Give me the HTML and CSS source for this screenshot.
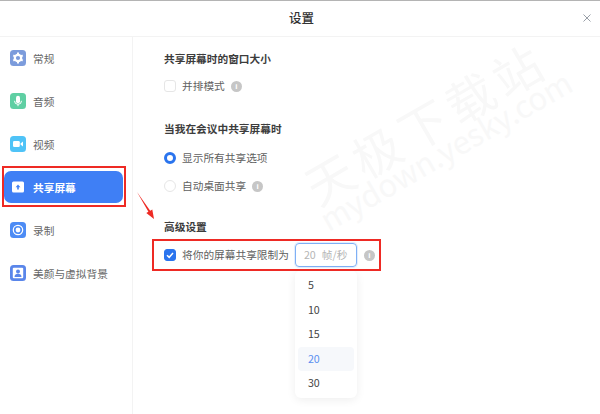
FILE: index.html
```html
<!DOCTYPE html>
<html lang="zh">
<head>
<meta charset="utf-8">
<title>设置</title>
<link rel="stylesheet" href="styles.css">
</head>
<body>
<div class="window">
  <header class="titlebar">
    <h1 class="title">设置</h1>
    <svg class="close" viewBox="0 0 8 8"><path d="M.5.5l7 7M7.500.5l-7 7"/></svg>
  </header>
  <div class="main">
    <nav class="sidebar">
      <a class="nav-item">
        <svg class="nav-icon" viewBox="0 0 16 16"><rect width="16" height="16" rx="3.500" fill="#7c9cdc"/><circle cx="8" cy="8" r="3.200" fill="none" stroke="#fff" stroke-width="2.200"/><path d="M8 2.600v2M8 11.400v2M3.300 5.300l1.700 1M11 9.700l1.700 1M3.300 10.700l1.700-1M11 6.300l1.700-1" stroke="#fff" stroke-width="2"/></svg>
        <span>常规</span>
      </a>
      <a class="nav-item">
        <svg class="nav-icon" viewBox="0 0 16 16"><rect width="16" height="16" rx="3.500" fill="#5fcfa3"/><rect x="6" y="2.800" width="4" height="7.400" rx="2" fill="#fff"/><path d="M4.500 7.800a3.500 3.500 0 0 0 7 0M8 11.300v1.900" fill="none" stroke="#fff" stroke-width="1"/></svg>
        <span>音频</span>
      </a>
      <a class="nav-item">
        <svg class="nav-icon" viewBox="0 0 16 16"><rect width="16" height="16" rx="3.500" fill="#4fc3f7"/><rect x="3" y="5" width="6.800" height="6" rx="1.300" fill="#fff"/><path d="M10.500 7.500L13 5.600v4.800L10.500 8.500z" fill="#fff"/></svg>
        <span>视频</span>
      </a>
      <a class="nav-item active">
        <svg class="nav-icon" viewBox="0 0 16 16"><rect x="2" y="2.500" width="12" height="11" rx="1.500" fill="#fff"/><path d="M8 5.500L5.600 8.200h1.600v2.300h1.600V8.200h1.600z" fill="#3f7ff5"/></svg>
        <span>共享屏幕</span>
      </a>
      <a class="nav-item">
        <svg class="nav-icon" viewBox="0 0 16 16"><rect width="16" height="16" rx="3.500" fill="#4d8cf5"/><circle cx="8" cy="8" r="4.700" fill="none" stroke="#fff" stroke-width="1.200"/><circle cx="8" cy="8" r="2.400" fill="#fff"/></svg>
        <span>录制</span>
      </a>
      <a class="nav-item">
        <svg class="nav-icon" viewBox="0 0 16 16"><rect width="16" height="16" rx="3.500" fill="#5a86ea"/><rect x="2.800" y="2.800" width="10.400" height="10.400" rx="1" fill="#fff"/><circle cx="8" cy="6.500" r="2" fill="#5a86ea"/><path d="M4.500 12c0-2.300 1.500-3.200 3.500-3.200s3.500.9 3.500 3.200z" fill="#5a86ea"/></svg>
        <span>美颜与虚拟背景</span>
      </a>
    </nav>
    <section class="content">
      <h2 class="heading">共享屏幕时的窗口大小</h2>
      <div class="option first">
        <span class="check"></span><span>并排模式</span><span class="info">i</span>
      </div>
      <h2 class="heading second">当我在会议中共享屏幕时</h2>
      <div class="option radio-first">
        <span class="radio on"></span><span>显示所有共享选项</span>
      </div>
      <div class="option">
        <span class="radio"></span><span>自动桌面共享</span><span class="info">i</span>
      </div>
      <h2 class="heading third">高级设置</h2>
      <div class="option limit">
        <span class="check on"><svg viewBox="0 0 10 10"><path d="M2 5.200l2.200 2.100L8 3"/></svg></span>
        <span>将你的屏幕共享限制为</span>
        <div class="fps-wrap">
          <div class="fps"><span class="fps-num">20</span><span>帧/秒</span></div>
          <ul class="menu">
            <li>5</li><li>10</li><li>15</li><li class="sel">20</li><li>30</li>
          </ul>
        </div>
        <span class="info">i</span>
      </div>
    </section>
  </div>
  <div class="watermark wm-cn">天极下载站</div>
  <div class="watermark wm-en">mydown.yesky.com</div>
  <div class="mark mark-nav"></div>
  <div class="mark mark-limit"></div>
  <svg class="arrow" viewBox="0 0 22 29"><path d="M2 1L15.200 19.800 17.300 18.500 19 28 11.300 22.100 13.400 20.800z" fill="#ee2a24"/></svg>
</div>
</body>
</html>
```
FILE: styles.css
```css
* { box-sizing: border-box; }
html, body { margin: 0; padding: 0; }
body {
  width: 600px;
  height: 414px;
  overflow: hidden;
  background: #fff;
  font-family: "Noto Sans CJK SC", "Noto Sans", sans-serif;
  color: #5f5f5f;
  font-size: 10.700px;
}
.window {
  position: relative;
  width: 600px;
  height: 414px;
  overflow: hidden;
  border-top: 1px solid #b4b4b4;
}
.titlebar {
  height: 36px;
  display: flex;
  align-items: center;
  justify-content: center;
  border-bottom: 1px solid #f3f3f3;
  position: relative;
}
.title {
  margin: 0 0 2px 3px;
  font-size: 12.500px;
  font-weight: 500;
  color: #333;
}
.close {
  position: absolute;
  right: 9px;
  top: 13px;
  width: 8px;
  height: 8px;
  fill: none;
  stroke: #7f8691;
  stroke-width: .8;
}
.main {
  display: flex;
  height: 377px;
}
.sidebar {
  width: 133px;
  border-right: 1px solid #f3f3f3;
  padding: 5px 9px 0 4px;
  display: flex;
  flex-direction: column;
  gap: 11px;
  flex: none;
}
.nav-item {
  height: 32px;
  display: flex;
  align-items: center;
  gap: 7px;
  padding-left: 6px;
  border-radius: 7px;
  color: #666;
}
.nav-item.active {
  background: #3f7ff5;
  color: #fff;
  font-weight: 700;
}
.nav-icon { width: 16px; height: 16px; flex: none; }
.content {
  padding: 15px 0 0 31px;
  flex: 1;
}
.heading {
  margin: 0;
  height: 14px;
  line-height: 14px;
  font-size: 10.700px;
  font-weight: 700;
  color: #3c3c3c;
}
.heading.second { margin-top: 29px; }
.heading.third { margin-top: 27px; }
.option {
  display: flex;
  align-items: center;
  gap: 6px;
  height: 14px;
  line-height: 14px;
  margin-top: 14px;
}
.option.first { margin-top: 13px; }
.option.radio-first { margin-top: 15px; }
.check {
  width: 12px;
  height: 12px;
  border: 1px solid #e6e6e6;
  border-radius: 3px;
  background: #fff;
  flex: none;
}
.check.on {
  background: #2a74ee;
  border-color: #2a74ee;
  display: flex;
}
.check svg { width: 100%; height: 100%; fill: none; stroke: #fff; stroke-width: 1.500; }
.radio {
  width: 12px;
  height: 12px;
  border: 1px solid #e6e6e6;
  border-radius: 50%;
  background: #fff;
  flex: none;
}
.radio.on { border: 3.500px solid #2a74ee; }
.info {
  width: 11px;
  height: 11px;
  border-radius: 50%;
  background: #c6c6c6;
  color: #fff;
  font: 700 8px/11px "Liberation Sans", sans-serif;
  text-align: center;
  flex: none;
}
.fps-wrap {
  position: relative;
  width: 62px;
  flex: none;
}
.fps {
  height: 24px;
  display: flex;
  align-items: center;
  gap: 6px;
  padding-left: 8px;
  border: 1px solid #7fb0f5;
  border-radius: 4px;
  color: #b5b5b5;
  box-shadow: 0 0 0 1px #e3eefd;
}
.limit .info { margin-left: 1px; }
.menu {
  position: absolute;
  top: 27px;
  left: 0;
  width: 62px;
  height: 128px;
  margin: 0;
  padding: 3px 3px;
  list-style: none;
  background: #fff;
  border-radius: 6px;
  box-shadow: 0 2px 10px rgba(0, 0, 0, .07);
  color: #444;
}
.menu li {
  height: 24.500px;
  line-height: 24.500px;
  padding-left: 10px;
  border-radius: 4px;
}
.menu li.sel { background: #f6f8fb; color: #5b8ff0; }
.watermark {
  position: absolute;
  color: #f8f8f8;
  white-space: nowrap;
  transform: rotate(-30deg);
  transform-origin: left center;
  pointer-events: none;
}
.wm-cn { left: 308px; top: 160px; font-size: 48px; letter-spacing: 6px; line-height: 56px; }
.wm-en { left: 322px; top: 203px; font-size: 31px; line-height: 34px; }
.mark {
  position: absolute;
  border: 2px solid #ee2a24;
  pointer-events: none;
}
.mark-nav { left: 2px; top: 165px; width: 124px; height: 41px; }
.mark-limit { left: 152px; top: 238px; width: 229px; height: 32px; }
.arrow {
  position: absolute;
  left: 135px;
  top: 190px;
  width: 22px;
  height: 29px;
}
```
